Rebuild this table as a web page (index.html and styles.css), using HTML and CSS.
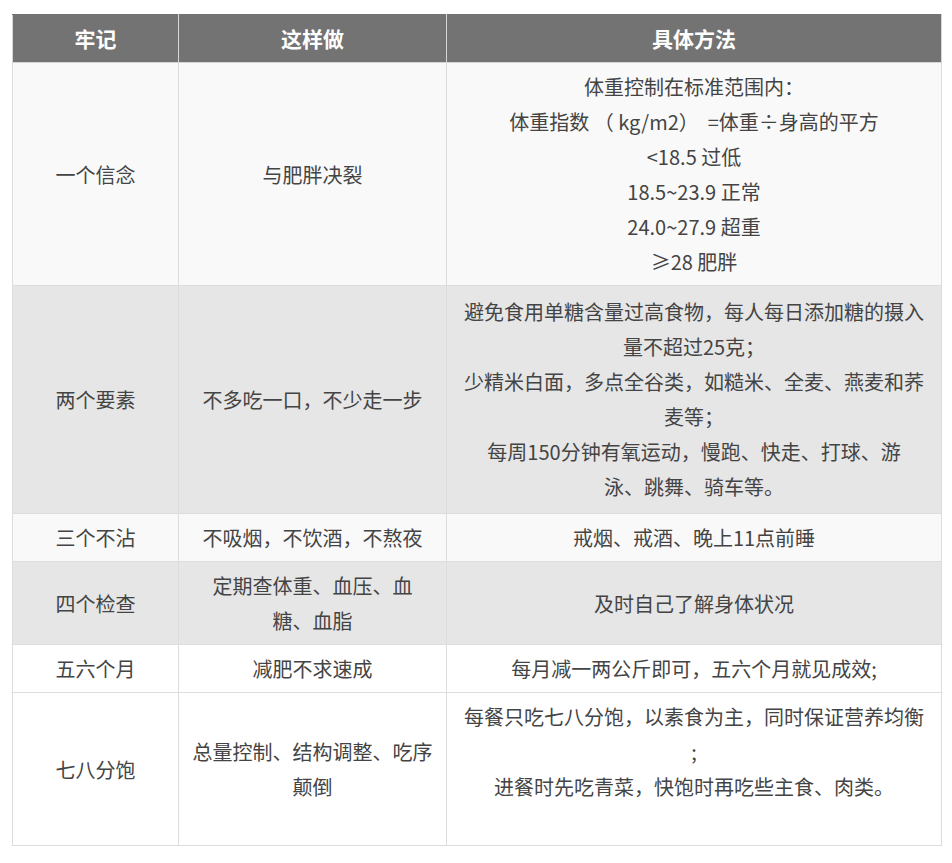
FILE: index.html
```html
<!DOCTYPE html>
<html lang="zh-CN">
<head>
<meta charset="utf-8">
<title>牢记</title>
<link rel="stylesheet" href="styles.css">
</head>
<body>
<table class="tbl">
  <colgroup>
    <col class="c1">
    <col class="c2">
    <col class="c3">
  </colgroup>
  <thead>
    <tr class="head">
      <th>牢记</th>
      <th>这样做</th>
      <th>具体方法</th>
    </tr>
  </thead>
  <tbody>
    <tr class="light">
      <td>一个信念</td>
      <td>与肥胖决裂</td>
      <td>体重控制在标准范围内：<br>体重指数 （ kg/m2） &nbsp;=体重÷身高的平方<br>&lt;18.5 过低<br>18.5~23.9 正常<br>24.0~27.9 超重<br>≥28 肥胖</td>
    </tr>
    <tr class="gray tall">
      <td>两个要素</td>
      <td>不多吃一口，不少走一步</td>
      <td>避免食用单糖含量过高食物，每人每日添加糖的摄入<br>量不超过25克；<br>少精米白面，多点全谷类，如糙米、全麦、燕麦和荞<br>麦等；<br>每周150分钟有氧运动，慢跑、快走、打球、游<br>泳、跳舞、骑车等。</td>
    </tr>
    <tr class="light">
      <td>三个不沾</td>
      <td>不吸烟，不饮酒，不熬夜</td>
      <td>戒烟、戒酒、晚上11点前睡</td>
    </tr>
    <tr class="gray">
      <td>四个检查</td>
      <td>定期查体重、血压、血<br>糖、血脂</td>
      <td>及时自己了解身体状况</td>
    </tr>
    <tr class="white">
      <td>五六个月</td>
      <td>减肥不求速成</td>
      <td>每月减一两公斤即可，五六个月就见成效;</td>
    </tr>
    <tr class="white">
      <td>七八分饱</td>
      <td>总量控制、结构调整、吃序<br>颠倒</td>
      <td>每餐只吃七八分饱，以素食为主，同时保证营养均衡<br>;<br>进餐时先吃青菜，快饱时再吃些主食、肉类。<br>&nbsp;</td>
    </tr>
  </tbody>
</table>
</body>
</html>
```
FILE: styles.css
```css
html, body {
  margin: 0;
  padding: 0;
  background: #ffffff;
}
body {
  font-family: "Noto Sans CJK SC", "Noto Sans", sans-serif;
  color: #444444;
}
.tbl {
  margin: 14px 0 0 12px;
  border-collapse: collapse;
  table-layout: fixed;
  width: 929px;
}
.c1 { width: 166px; }
.c2 { width: 268px; }
.c3 { width: 495px; }
.tbl th,
.tbl td {
  border: 1px solid #dddddd;
  text-align: center;
  vertical-align: middle;
  padding: 6px 4px;
  font-size: 20px;
  line-height: 35px;
  white-space: nowrap;
}
.head th {
  background: #737373;
  color: #ffffff;
  font-weight: 700;
  font-size: 21px;
  border-color: #d6d6d6;
  border-top-color: #737373;
}
.light td { background: #f9f9f9; }
.gray td { background: #e6e6e6; }
.white td { background: #ffffff; }
.tall td { padding-top: 8px; padding-bottom: 9px; }
```
